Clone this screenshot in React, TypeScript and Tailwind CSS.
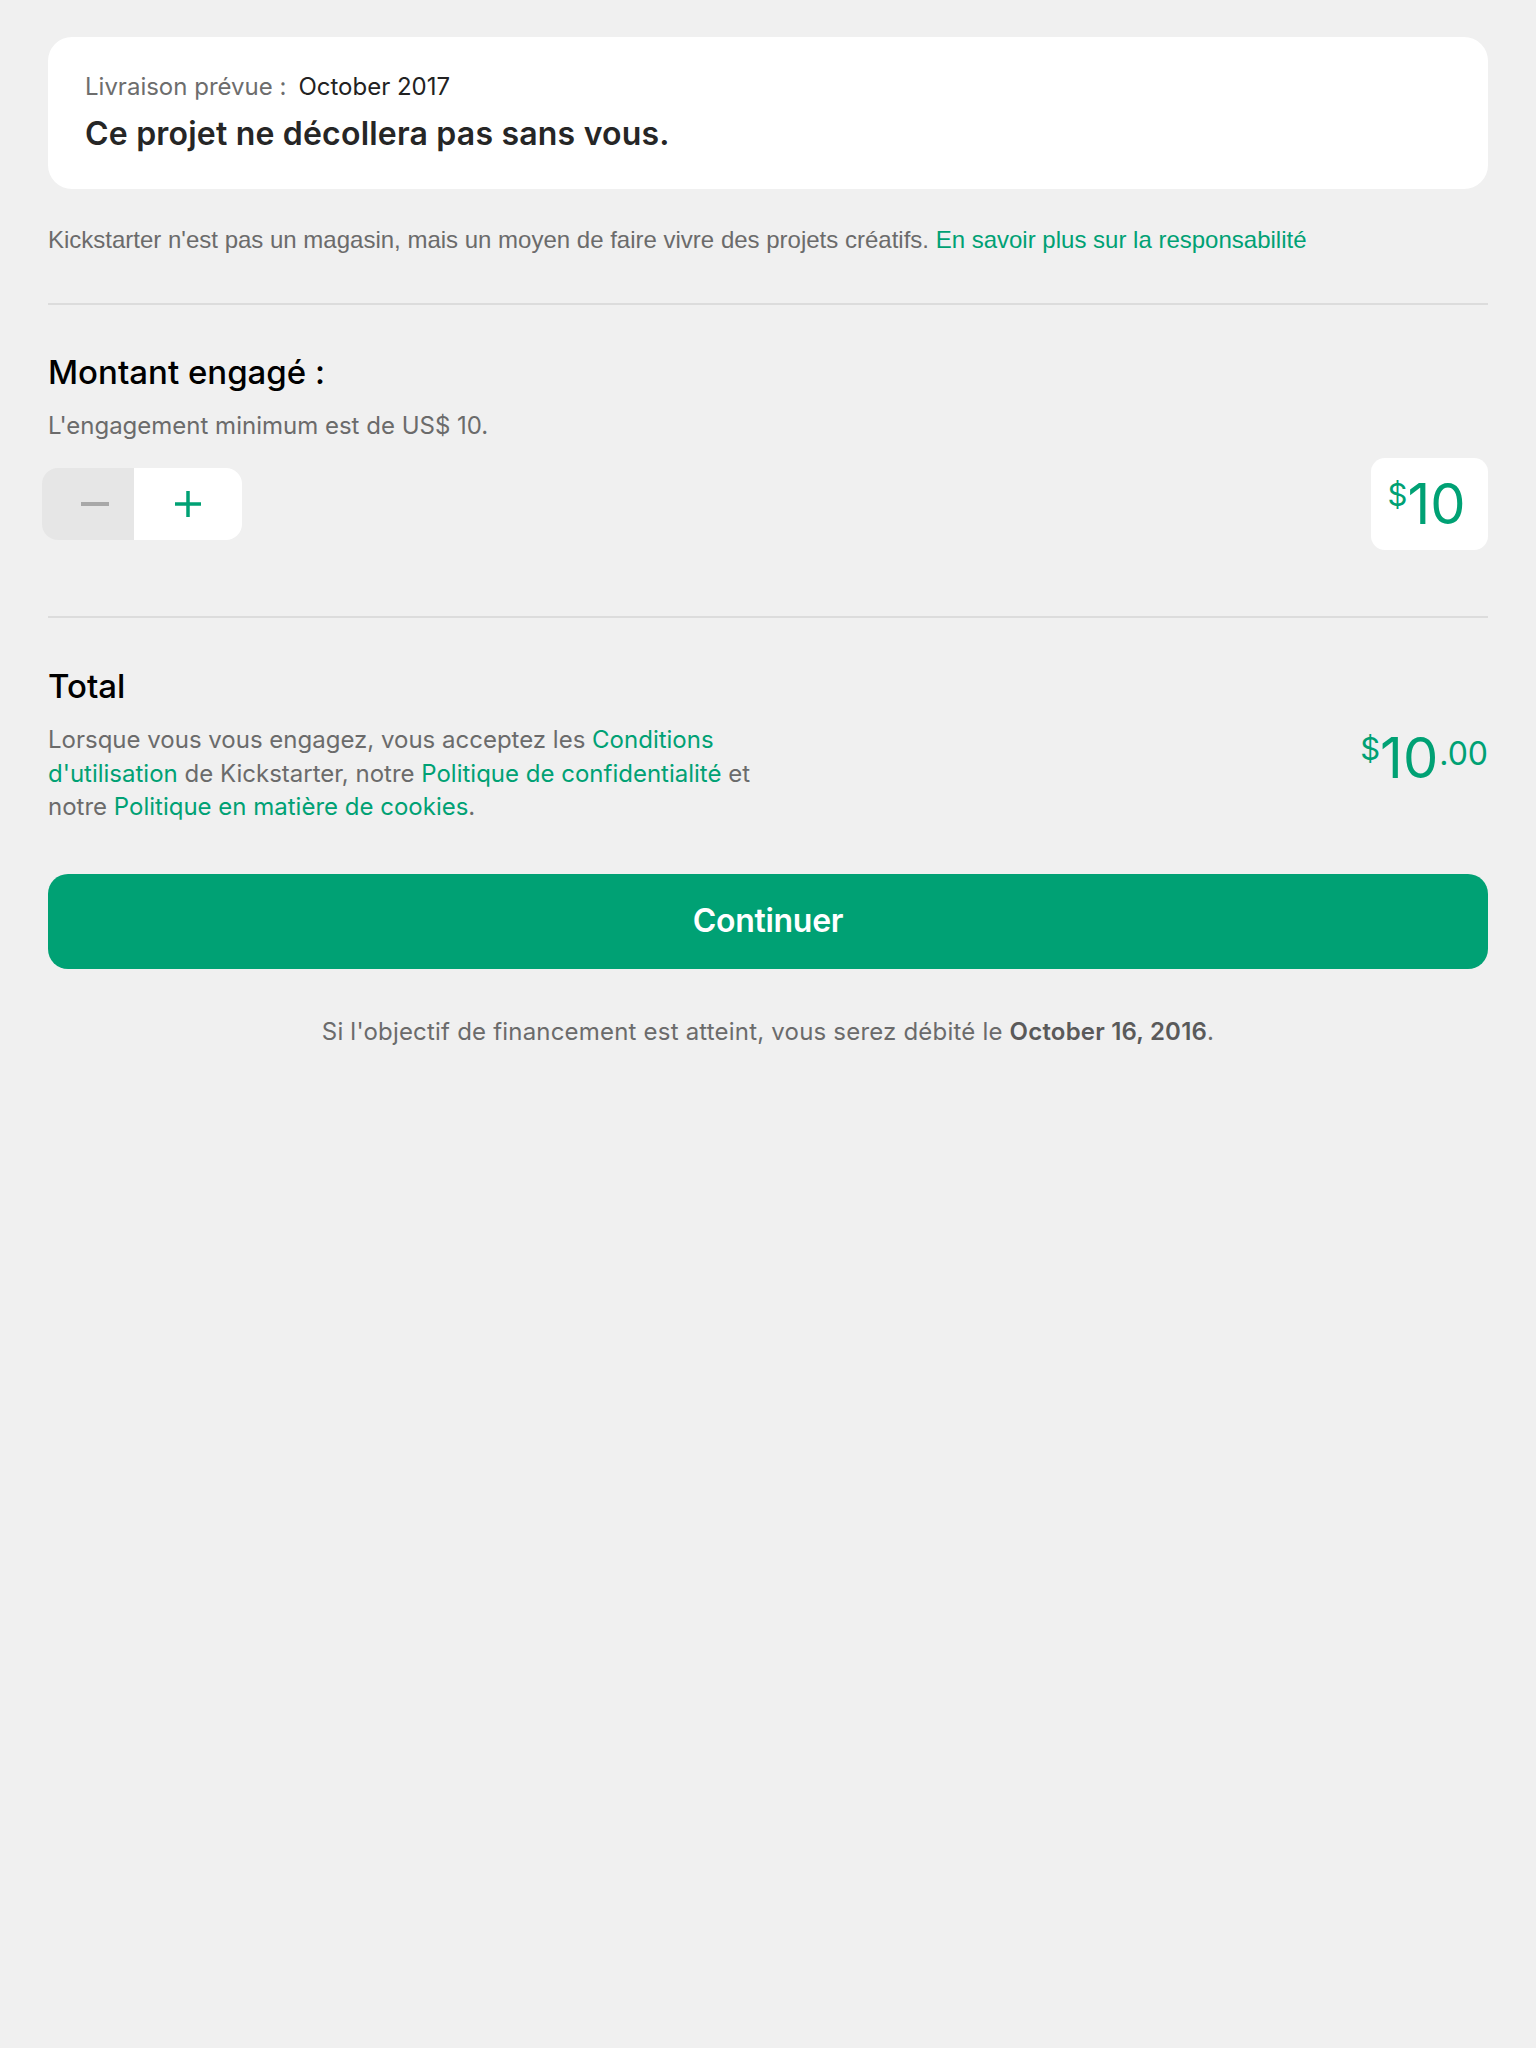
import React from "react";

const GREEN = "text-[#00a174]";

const Price = ({ cents }: { cents?: string }) => (
  <div className={`flex items-start leading-none ${GREEN}`}>
    <span className="text-[31px] mt-[3px]">$</span>
    <span className="text-[56px]">10</span>
    {cents && <span className="text-[32px] mt-[8px] ml-[1px]">.{cents}</span>}
  </div>
);

export default function App() {
  return (
    <div
      className="min-h-[2048px] w-full bg-[#f0f0f0] px-12 pt-[37px]"
      style={{ fontFamily: "Inter, 'Noto Sans', sans-serif" }}
    >
      {/* delivery card */}
      <div className="rounded-[24px] bg-white px-[37px] pt-[34px] pb-[35px]">
        <div className="flex items-center text-[24px] leading-[32px]">
          <span className="text-[#6d6d6d]">Livraison prévue :</span>
          <span className="ml-[12px] text-[#222]">October 2017</span>
        </div>
        <h2 className="mt-[11px] text-[32px] leading-[40px] font-semibold tracking-[0.2px] text-[#262626]">
          Ce projet ne décollera pas sans vous.
        </h2>
      </div>

      <p
        className="mt-[35px] text-[24px] leading-[32px] text-[#6b6b6b]"
        style={{ fontFamily: "'Liberation Sans', Arial, sans-serif" }}
      >
        Kickstarter n'est pas un magasin, mais un moyen de faire vivre des projets créatifs.{" "}
        <a className={GREEN}>En savoir plus sur la responsabilité</a>
      </p>

      <div className="mt-[47px] h-[2px] bg-[#dcdcdc]" />

      {/* pledge amount */}
      <h3 className="mt-[47px] text-[33px] leading-[40px] font-medium text-black">
        Montant engagé :
      </h3>
      <p className="mt-[18px] text-[24px] leading-[32px] text-[#6b6b6b]">
        L'engagement minimum est de US$ 10.
      </p>

      <div className="mt-[16px] flex items-center justify-between">
        <div className="-ml-[6px] flex h-[72px] overflow-hidden rounded-[16px]">
          <button className="flex w-[92px] items-center justify-center bg-[#e6e6e6] pl-[14px]">
            <span className="block h-[4px] w-[28px] bg-[#a8a8a8]" />
          </button>
          <button className="flex w-[108px] items-center justify-center bg-white">
            <svg width="28" height="28" viewBox="0 0 28 28">
              <path d="M14 1v26M1 14h26" stroke="#00a174" strokeWidth="3.5" />
            </svg>
          </button>
        </div>
        <div className="flex h-[92px] w-[117px] items-center justify-center rounded-[14px] bg-white pr-[6px]">
          <Price />
        </div>
      </div>

      <div className="mt-[66px] h-[2px] bg-[#dcdcdc]" />

      {/* total */}
      <h3 className="mt-[48px] text-[33px] leading-[40px] font-medium text-black">
        Total
      </h3>
      <div className="mt-[17px] flex items-start justify-between">
        <p className="max-w-[730px] text-[24px] leading-[33.5px] text-[#6b6b6b]">
          Lorsque vous vous engagez, vous acceptez les{" "}
          <a className={GREEN}>Conditions d'utilisation</a> de Kickstarter, notre{" "}
          <a className={GREEN}>Politique de confidentialité</a> et notre{" "}
          <a className={GREEN}>Politique en matière de cookies</a>.
        </p>
        <div className="mt-[7px]">
          <Price cents="00" />
        </div>
      </div>

      <button className="mt-[50px] flex h-[95px] w-full items-center justify-center rounded-[20px] bg-[#00a174] text-[32px] font-semibold tracking-[-0.3px] text-white">
        Continuer
      </button>

      <p className="mt-[47px] text-center text-[24px] leading-[32px] text-[#6b6b6b] tracking-[0.2px]">
        Si l'objectif de financement est atteint, vous serez débité le{" "}
        <span className="font-semibold text-[#5a5a5a]">October 16, 2016</span>.
      </p>
    </div>
  );
}
